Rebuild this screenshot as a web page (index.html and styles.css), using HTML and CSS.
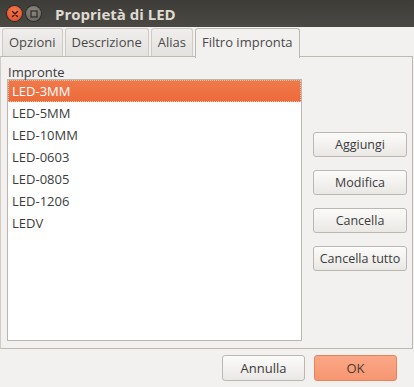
FILE: index.html
```html
<!DOCTYPE html>
<html lang="it">
<head>
    <meta charset="UTF-8">
    <title>Proprietà di LED</title>
    <link rel="stylesheet" href="styles.css">
</head>
<body>
    <div class="window">
        <div class="titlebar">
            <span class="wbtn close">
                <svg width="8" height="8" viewBox="0 0 8 8"><path d="M1.5 1.5l5 5M6.5 1.5l-5 5" stroke="#3a1408" stroke-width="1.4" stroke-linecap="round"/></svg>
            </span>
            <span class="wbtn max">
                <svg width="8" height="8" viewBox="0 0 8 8"><rect x="1" y="1" width="6" height="6" fill="none" stroke="#2b2a27" stroke-width="1.2"/></svg>
            </span>
            <span class="title">Proprietà di LED</span>
        </div>

        <div class="notebook">
            <div class="tabs">
                <div class="tab">Opzioni</div>
                <div class="tab">Descrizione</div>
                <div class="tab">Alias</div>
                <div class="tab active">Filtro impronta</div>
            </div>
            <div class="panel">
                <div class="list-col">
                    <div class="label">Impronte</div>
                    <ul class="list">
                        <li class="selected">LED-3MM</li>
                        <li>LED-5MM</li>
                        <li>LED-10MM</li>
                        <li>LED-0603</li>
                        <li>LED-0805</li>
                        <li>LED-1206</li>
                        <li>LEDV</li>
                    </ul>
                </div>
                <div class="side-buttons">
                    <button class="btn">Aggiungi</button>
                    <button class="btn">Modifica</button>
                    <button class="btn">Cancella</button>
                    <button class="btn">Cancella tutto</button>
                </div>
            </div>
        </div>

        <div class="actions">
            <button class="btn wide">Annulla</button>
            <button class="btn wide ok">OK</button>
        </div>
    </div>
</body>
</html>
```

FILE: styles.css
```css
body {
    margin: 0;
    padding: 0;
    background-color: #f2f1f0;
    font-family: "Open Sans", "Noto Sans", sans-serif;
    font-size: 13px;
    color: #3c3c3c;
}

.window {
    width: 414px;
    height: 387px;
    display: flex;
    flex-direction: column;
    overflow: hidden;
}

.titlebar {
    height: 27px;
    display: flex;
    align-items: center;
    padding-left: 7px;
    background: linear-gradient(#3d3c38, #4b4943);
    box-sizing: border-box;
}

.wbtn {
    width: 15px;
    height: 15px;
    border-radius: 50%;
    display: flex;
    align-items: center;
    justify-content: center;
    margin-right: 4px;
}

.wbtn.close {
    background: radial-gradient(circle at 50% 35%, #f57a4e, #df4c1f);
    box-shadow: 0 0 0 1px #2e2d29;
}

.wbtn.max {
    background: radial-gradient(circle at 50% 35%, #8a877f, #65625b);
    box-shadow: 0 0 0 1px #2e2d29;
}

.title {
    margin-left: 10px;
    color: #dfdbd2;
    font-weight: bold;
    font-size: 15px;
}

.notebook {
    padding: 1px 1px 0 0;
}

.tabs {
    display: flex;
    padding-left: 2px;
    gap: 2px;
    height: 28px;
    position: relative;
    z-index: 1;
}

.tab {
    padding: 0 6px;
    line-height: 27px;
    border: 1px solid #cfcbc4;
    border-bottom: none;
    border-radius: 3px 3px 0 0;
    background: linear-gradient(#efeeec, #e4e2df);
    color: #4a4a4a;
}

.tab.active {
    background: #f2f1f0;
    border-color: #bdb8b0;
    height: 29px;
    padding: 0 6px;
}

.panel {
    border: 1px solid #bdb8b0;
    border-left-color: #d0ccc5;
    display: flex;
    box-sizing: border-box;
    height: 293px;
}

.list-col {
    width: 295px;
    padding-left: 6px;
}

.label {
    line-height: 14px;
    padding: 8px 0 0 1px;
}

.list {
    list-style: none;
    margin: 0;
    padding: 0;
    height: 262px;
    background: #ffffff;
    border: 1px solid #bab6b0;
    box-sizing: border-box;
}

.list li {
    height: 22px;
    line-height: 22px;
    padding-left: 4px;
    color: #3c3c3c;
}

.list li.selected {
    background: linear-gradient(#f07a4a, #ec6a3b);
    color: #ffffff;
    outline: 1px dotted #f8c3a8;
    outline-offset: -1px;
}

.side-buttons {
    display: flex;
    flex-direction: column;
    gap: 13px;
    padding: 75px 0 0 11px;
}

.btn {
    font-family: inherit;
    font-size: 12.5px;
    color: #3c3c3c;
    width: 94px;
    height: 25px;
    padding: 0;
    border: 1px solid #bcb8b1;
    border-radius: 3px;
    background: linear-gradient(#fbfbfa, #eae8e5);
}

.actions {
    display: flex;
    justify-content: flex-end;
    gap: 9px;
    padding: 6px 17px 0 0;
}

.btn.wide {
    width: 83px;
    height: 26px;
    font-size: 13px;
}

.btn.ok {
    background: linear-gradient(#fba888, #f69670);
    border-color: #e5855c;
    color: #4a3a33;
}
```
